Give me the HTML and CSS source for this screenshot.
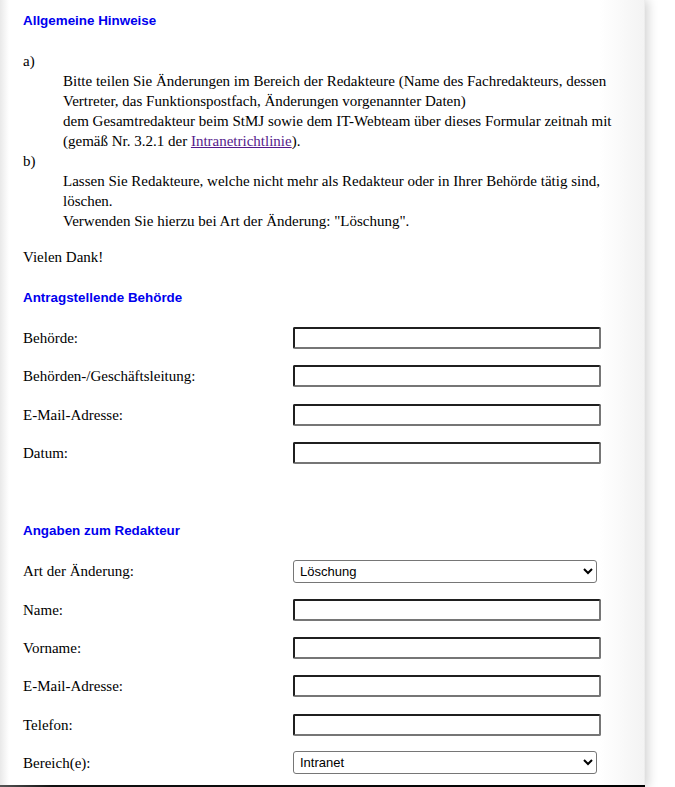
FILE: index.html
```html
<!DOCTYPE html>
<html lang="de">
<head>
<meta charset="utf-8">
<title>Redakteure</title>
<link rel="stylesheet" href="styles.css">
</head>
<body>
<div class="page">
  <div class="content">
    <h2 class="head head-first">Allgemeine Hinweise</h2>
    <dl class="notes">
      <dt>a)</dt>
      <dd>Bitte teilen Sie Änderungen im Bereich der Redakteure (Name des Fachredakteurs, dessen Vertreter, das Funktionspostfach, Änderungen vorgenannter Daten)<br>dem Gesamtredakteur beim StMJ sowie dem IT-Webteam über dieses Formular zeitnah mit (gemäß Nr. 3.2.1 der <a href="#">Intranetrichtlinie</a>).</dd>
      <dt>b)</dt>
      <dd>Lassen Sie Redakteure, welche nicht mehr als Redakteur oder in Ihrer Behörde tätig sind, löschen.<br>Verwenden Sie hierzu bei Art der Änderung: "Löschung".</dd>
    </dl>
    <p class="thanks">Vielen Dank!</p>

    <h2 class="head">Antragstellende Behörde</h2>
    <div class="form form-first">
      <label class="lbl">Behörde:</label><input class="field" type="text">
      <label class="lbl">Behörden-/Geschäftsleitung:</label><input class="field" type="text">
      <label class="lbl">E-Mail-Adresse:</label><input class="field" type="text">
      <label class="lbl">Datum:</label><input class="field" type="text">
    </div>

    <h2 class="head head-second">Angaben zum Redakteur</h2>
    <div class="form form-second">
      <label class="lbl">Art der Änderung:</label>
      <select class="sel"><option>Löschung</option></select>
      <label class="lbl">Name:</label><input class="field" type="text">
      <label class="lbl">Vorname:</label><input class="field" type="text">
      <label class="lbl">E-Mail-Adresse:</label><input class="field" type="text">
      <label class="lbl">Telefon:</label><input class="field" type="text">
      <label class="lbl">Bereich(e):</label>
      <select class="sel"><option>Intranet</option></select>
    </div>
  </div>
  <div class="footer"></div>
</div>
</body>
</html>
```
FILE: styles.css
```css
html, body {
  margin: 0;
  padding: 0;
  background: #ffffff;
}
body {
  font-family: "Liberation Serif", "Times New Roman", serif;
  font-size: 15px;
  line-height: 20px;
  color: #000;
}
.page {
  width: 645px;
  background: linear-gradient(to right, #e9e9e9 0px, #ffffff 9px, #ffffff 600px, #f3f3f3 644px, #e6e6e6 645px);
  box-shadow: 3px 0 10px rgba(0, 0, 0, 0.18);
  position: relative;
}
.content {
  padding: 11px 0 0 23px;
}
.head {
  font-family: "Liberation Sans", Arial, sans-serif;
  font-size: 13.4px;
  font-weight: bold;
  color: #0000ee;
  line-height: 20px;
  margin: 0;
}
.notes {
  margin: 20px 0 0 0;
}
.notes dt {
  margin: 0;
}
.notes dd {
  margin: 0 0 0 40px;
}
.notes a {
  color: #551a8b;
  text-decoration: underline;
}
.thanks {
  margin: 16px 0 21px 0;
}
.form {
  display: grid;
  grid-template-columns: 270px 308px;
  grid-auto-rows: 38.3px;
  align-items: center;
}
.form-first {
  margin-top: 11px;
}
.form-second {
  margin-top: 11px;
}
.lbl {
  display: block;
}
.field {
  box-sizing: border-box;
  width: 308px;
  height: 22px;
  margin: 0;
  padding: 1px 2px;
  border-style: solid;
  border-width: 2px;
  border-color: #1f1f1f #767676 #767676 #1f1f1f;
  border-radius: 2px;
  background: #fff;
  font-family: "Liberation Sans", Arial, sans-serif;
  font-size: 13px;
}
.sel {
  box-sizing: border-box;
  width: 304px;
  height: 23px;
  margin: 0;
  border: 1px solid #767676;
  border-radius: 3px;
  background: #fff;
  font-family: "Liberation Sans", Arial, sans-serif;
  font-size: 13px;
  color: #000;
  padding: 0 2px;
}
.head-second {
  margin-top: 49px;
}
.footer {
  height: 3px;
  margin-top: 3px;
  background: linear-gradient(to right, #555 0px, #111 52px, #000 100%);
}
```
